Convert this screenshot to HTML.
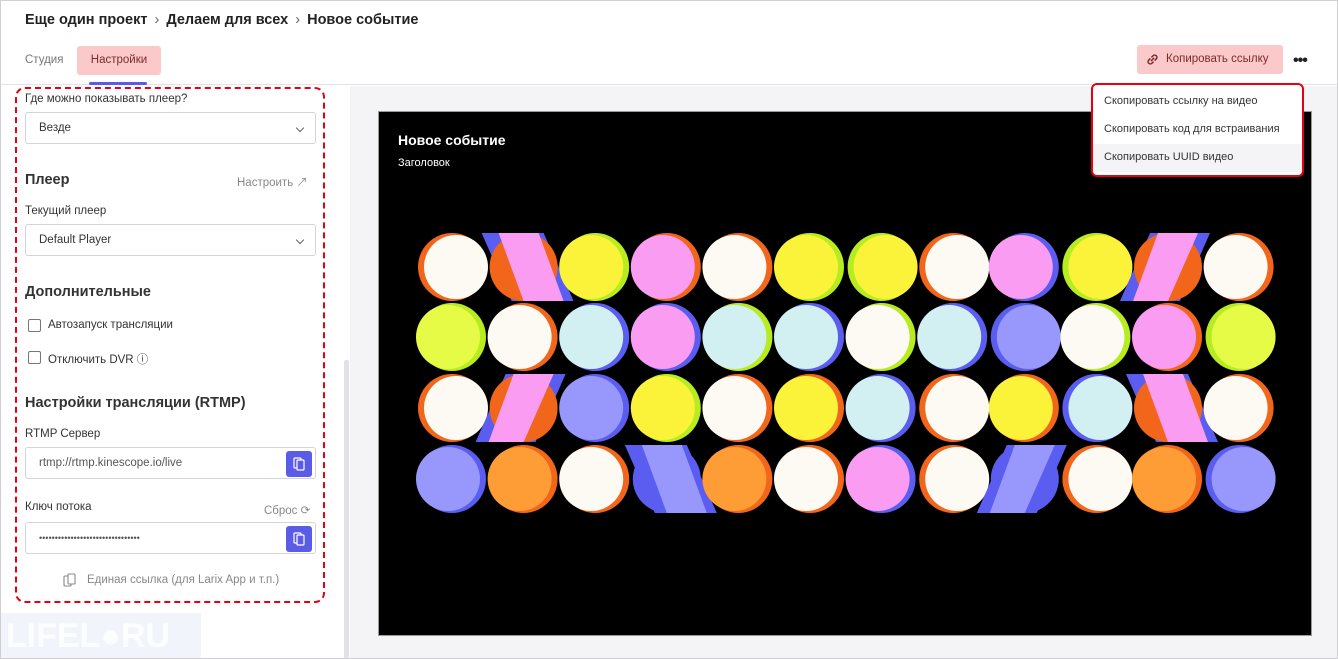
<!DOCTYPE html>
<html><head><meta charset="utf-8"><style>
*{box-sizing:border-box;margin:0;padding:0}
body{width:1338px;height:659px;overflow:hidden;font-family:"Liberation Sans","Noto Sans CJK SC",sans-serif;background:#fff;position:relative;color:#222}
.frame{position:absolute;inset:0;border:1px solid #cfcfd4}
.hdr{position:absolute;left:0;top:0;width:1338px;height:85px;border-bottom:1px solid #e4e4e8;background:#fff}
.bc{position:absolute;left:25px;top:12px;font-size:14.5px;font-weight:bold;color:#222}
.bc span{color:#666;margin:0 7px;font-weight:normal}
.tab1{position:absolute;left:25px;top:54px;font-size:11.5px;color:#777}
.tab2{position:absolute;left:77px;top:46px;width:84px;height:29px;background:#fbc9c9;border-radius:3px;font-size:11.5px;color:#7a2b2b;text-align:center;line-height:29px}
.ul{position:absolute;left:89px;top:82px;width:58px;height:3px;background:#5a5ce8;border-radius:2px}
.copy{position:absolute;left:1137px;top:45px;width:146px;height:29px;background:#fbc9c9;border-radius:3px;font-size:11.5px;color:#7a2b2b;line-height:29px;padding-left:29px}
.dots{position:absolute;left:1293px;top:52px;font-size:16px;letter-spacing:-1px;font-weight:bold}
.left{position:absolute;left:0;top:86px;width:346px;height:573px;background:#fff}
.sb{position:absolute;left:344px;top:360px;width:5px;height:299px;background:#e2e2e6;border-radius:2px}
.right{position:absolute;left:350px;top:86px;width:987px;height:572px;background:#f4f4f7}
.video{position:absolute;left:378px;top:111px;width:934px;height:525px;background:#000;border:1px solid #999}
.dash{position:absolute;left:15px;top:87px;width:310px;height:516px;border:2px dashed #e50012;border-radius:10px}
.t{position:absolute;font-size:11.5px;color:#333}
.h{position:absolute;font-size:14.5px;font-weight:bold;color:#333}
.sel{position:absolute;left:25px;width:291px;height:32px;border:1px solid #d4d4d8;border-radius:3px;font-size:11.5px;color:#333;padding-left:13px;line-height:30px}
.sel .ch{position:absolute;right:12px;top:12px;width:6px;height:6px;border-right:1px solid #666;border-bottom:1px solid #666;transform:rotate(45deg)}
.cb{position:absolute;left:28px;width:13px;height:13px;border:1px solid #777;border-radius:2px}
.btn{position:absolute;right:3px;top:3px;width:26px;height:26px;background:#5a5ce8;border-radius:3px}
.menu{position:absolute;left:1091px;top:83px;width:213px;height:94px;border:2px solid #e50012;border-radius:6px;background:#fff}
.menu div{font-size:11px;color:#333;position:absolute;left:11px}
</style></head><body>
<div class="hdr">
<div class="bc">Еще один проект<span>›</span>Делаем для всех<span>›</span>Новое событие</div>
<div class="tab1">Студия</div>
<div class="tab2">Настройки</div>
<div class="ul"></div>
<div class="copy"><svg style="position:absolute;left:8px;top:7px" width="15" height="15" viewBox="0 0 14 14" fill="none" stroke="#7a2b2b" stroke-width="1.4"><path d="M5.5 8.5l3-3M5 6L3.5 7.5a2.1 2.1 0 0 0 3 3L8 9M9 8l1.5-1.5a2.1 2.1 0 0 0-3-3L6 5"/></svg>Копировать ссылку</div>
<div class="dots">•••</div>
</div>
<div class="left"></div>
<div class="sb"></div>
<div class="right"></div>
<div class="video">
<div style="position:absolute;left:19px;top:20px;color:#fff;font-size:14px;font-weight:bold">Новое событие</div>
<div style="position:absolute;left:19px;top:45px;color:#fff;font-size:11px">Заголовок</div>
</div>
<svg style="position:absolute;left:0;top:0" width="1338" height="659" id="g"></svg>
<div class="menu">
<div style="top:10px">Скопировать ссылку на видео</div>
<div style="top:38px">Скопировать код для встраивания</div>
<div style="top:59px;left:0;width:209px;height:28px;background:#f4f4f6"></div>
<div style="top:66px">Скопировать UUID видео</div>
</div>
<div class="t" style="left:25px;top:93px">Где можно показывать плеер?</div>
<div class="sel" style="top:112px">Везде<div class="ch"></div></div>
<div class="h" style="left:25px;top:172px">Плеер</div>
<div class="t" style="left:237px;top:174px;color:#888">Настроить ↗</div>
<div class="t" style="left:25px;top:205px">Текущий плеер</div>
<div class="sel" style="top:224px">Default Player<div class="ch"></div></div>
<div class="h" style="left:25px;top:284px">Дополнительные</div>
<div class="cb" style="top:319px"></div><div class="t" style="left:48px;top:319px">Автозапуск трансляции</div>
<div class="cb" style="top:351px"></div><div class="t" style="left:48px;top:351px">Отключить DVR ⓘ</div>
<div class="h" style="left:25px;top:395px">Настройки трансляции (RTMP)</div>
<div class="t" style="left:25px;top:428px">RTMP Сервер</div>
<div class="sel" style="top:447px;color:#555">rtmp://rtmp.kinescope.io/live<div class="btn"><svg width="26" height="26" viewBox="0 0 26 26" fill="none" stroke="#fff" stroke-width="1.2"><rect x="8" y="7" width="7" height="10" rx="1"/><rect x="11" y="9" width="7" height="10" rx="1" fill="#5a5ce8"/></svg></div></div>
<div class="t" style="left:25px;top:501px">Ключ потока</div>
<div class="t" style="left:264px;top:503px;color:#888">Сброс ⟳</div>
<div class="sel" style="top:522px;color:#555;font-size:9px">••••••••••••••••••••••••••••••••<div class="btn"><svg width="26" height="26" viewBox="0 0 26 26" fill="none" stroke="#fff" stroke-width="1.2"><rect x="8" y="7" width="7" height="10" rx="1"/><rect x="11" y="9" width="7" height="10" rx="1" fill="#5a5ce8"/></svg></div></div>
<svg style="position:absolute;left:63px;top:573px" width="14" height="16" viewBox="0 0 14 16" fill="none" stroke="#888" stroke-width="1.1"><rect x="1" y="3" width="7" height="10" rx="1"/><rect x="5" y="1" width="7" height="10" rx="1" fill="#fff"/></svg>
<div class="t" style="left:87px;top:574px;color:#888">Единая ссылка (для Larix App и т.п.)</div>
<div class="dash"></div>
<div style="position:absolute;left:0;top:613px;width:201px;height:46px;background:#f1f5fb;color:#fcfdff;font-size:34px;font-weight:bold;padding-left:6px;line-height:46px">LIFEL●RU</div>
<div class="frame"></div>
<script>
const W='#fdfaf3',Y='#fbf23a',P='#f99cf2',L='#d2f0f2',V='#9797fc',O='#fe9c35',G='#e6fb45',ro='#f2661b',rb='#5b5cf0',rg='#b7ec21';
const rows=[
[[W,ro,1],['D1'],[Y,rg,-1],[P,ro,-1],[W,ro,-1],[Y,rg,-1],[Y,rg,1],[W,ro,1],[P,rb,-1],[Y,rg,1],['D2'],[W,ro,-1]],
[[G,rg,-1],[W,ro,-1],[L,rb,-1],[P,rb,-1],[L,rg,-1],[L,rb,-1],[W,rg,-1],[L,rb,-1],[V,rb,1],[W,rg,-1],[P,ro,-1],[G,rg,1]],
[[W,ro,1],['D2'],[V,rb,-1],[Y,rg,-1],[W,ro,-1],[Y,ro,-1],[L,rb,-1],[W,ro,1],[Y,ro,-1],[L,rb,1],['D1'],[W,ro,-1]],
[[V,rb,-1],[O,ro,-1],[W,ro,-1],['D3'],[O,ro,-1],[W,ro,-1],[P,rb,-1],[W,ro,1],['D4'],[W,ro,1],[O,ro,-1],[V,rb,1]]];
let s='';const xs=[],ys=[267,337,408,479];
for(let i=0;i<12;i++)xs.push(452+i*71.6);
rows.forEach((r,ri)=>r.forEach((c,ci)=>{const x=xs[ci],y=ys[ri];
if(c[0][0]=='D'){
const col=(c[0]=='D3'||c[0]=='D4')?V:P;
if(c[0]=='D1'||c[0]=='D3'){s+=`<polygon points="${x-42},${y-34} ${x+20},${y-34} ${x+50},${y+34} ${x-12},${y+34}" fill="${rb}"/><circle cx="${x}" cy="${y}" r="34" fill="${c[0]=='D1'?ro:rb}"/><polygon points="${x-25},${y-34} ${x+15},${y-34} ${x+40},${y+34} ${x},${y+34}" fill="${col}"/>`}
else{s+=`<polygon points="${x-48},${y+34} ${x+12},${y+34} ${x+42},${y-34} ${x-18},${y-34}" fill="${rb}"/><circle cx="${x}" cy="${y}" r="34" fill="${c[0]=='D2'?ro:rb}"/><polygon points="${x-35},${y+34} ${x},${y+34} ${x+30},${y-34} ${x-10},${y-34}" fill="${col}"/>`}
}else{s+=`<circle cx="${x}" cy="${y}" r="34" fill="${c[1]}"/><circle cx="${x+c[2]*4}" cy="${y}" r="32" fill="${c[0]}"/>`}
}));
document.getElementById('g').innerHTML=s;
</script>
</body></html>
